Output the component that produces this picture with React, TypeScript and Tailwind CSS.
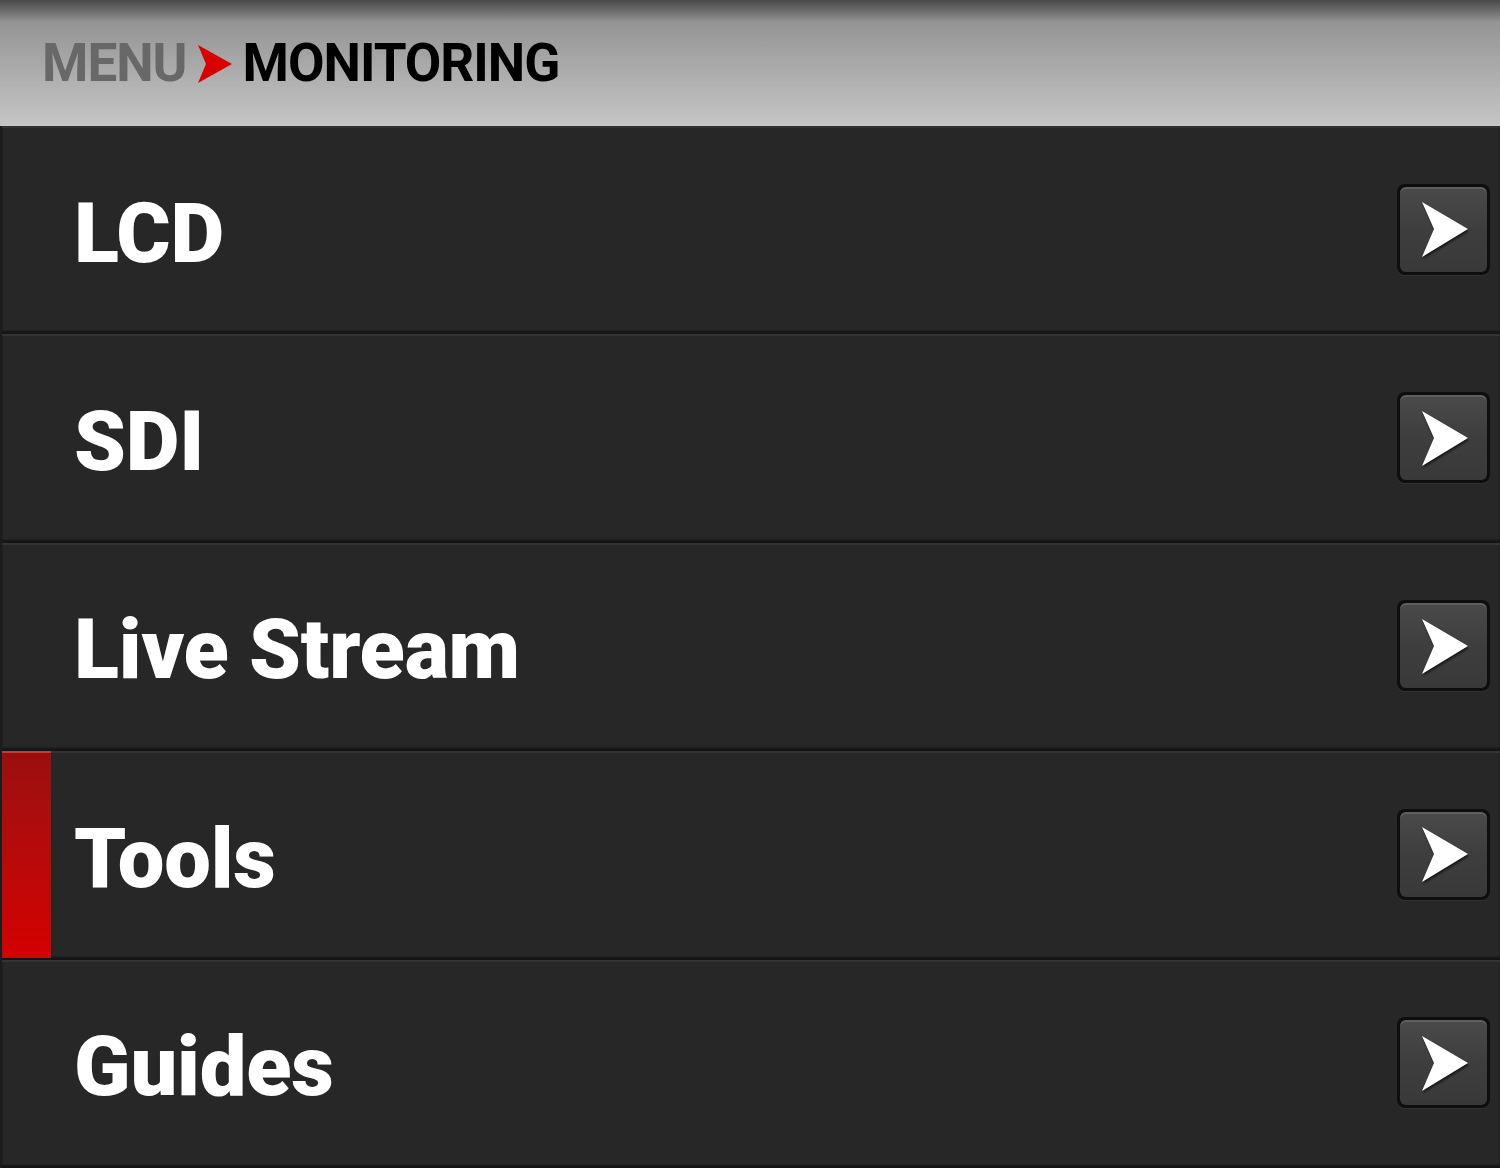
import React from "react";

const items = ["LCD", "SDI", "Live Stream", "Tools", "Guides"];

function ArrowButton() {
  return (
    <div className="w-[93px] h-[91px] rounded-[8px] bg-[#0e0e0e] p-[3px] shadow-[0_1px_0_rgba(255,255,255,0.06)]">
      <div className="w-full h-full rounded-[6px] bg-gradient-to-b from-[#4a4a4a] via-[#3e3e3e] to-[#393939] shadow-[inset_0_2px_0_rgba(255,255,255,0.12)] flex items-center justify-center">
        <svg width="56" height="60" viewBox="0 0 56 60" className="drop-shadow-[1px_2px_1px_rgba(0,0,0,0.6)]">
          <path d="M6 3 L52 30 L6 58 L18 30 Z" fill="#ffffff" />
        </svg>
      </div>
    </div>
  );
}

export default function App() {
  return (
    <div className="w-[1500px] h-[1168px] bg-[#1a1a1a] overflow-hidden" style={{ fontFamily: "Roboto, 'Liberation Sans', sans-serif" }}>
      <div className="h-[126px] relative bg-gradient-to-b from-[#8a8a8a] via-[#a8a8a8] to-[#c6c6c6] flex items-center pl-[42px]">
        <div className="absolute inset-x-0 top-0 h-[22px] bg-gradient-to-b from-[#4a4a4a] to-transparent" />
        <div className="relative flex items-center mt-[1px]">
          <span className="text-[53px] font-bold text-[#686868] leading-none tracking-[-1px]">MENU</span>
          <svg width="36" height="40" viewBox="0 0 36 40" className="ml-[10px] mr-[10px]">
            <path d="M1 1 L35 20 L1 39 L9 20 Z" fill="#d90000" />
          </svg>
          <span className="text-[53px] font-bold text-black leading-none tracking-[-1px]">MONITORING</span>
        </div>
      </div>
      <div className="flex flex-col">
        {items.map((label) => (
          <div
            key={label}
            className="h-[208.4px] relative bg-[#272727] border-l-2 border-[#1c1c1c] shadow-[inset_0_2px_0_#333,inset_0_-3px_2px_#151515] flex items-center"
          >
            {label === "Tools" && (
              <div className="absolute left-0 top-0 bottom-[2px] w-[49px] bg-gradient-to-b from-[#9a0f0f] to-[#d50000] shadow-[inset_0_2px_0_#c23a3a]" />
            )}
            <span className="relative ml-[72px] text-[83px] font-black text-white leading-none tracking-[-0.2px] mt-[6px]">
              {label}
            </span>
            <div className="ml-auto mr-[10px] mt-[-2px]">
              <ArrowButton />
            </div>
          </div>
        ))}
      </div>
    </div>
  );
}
